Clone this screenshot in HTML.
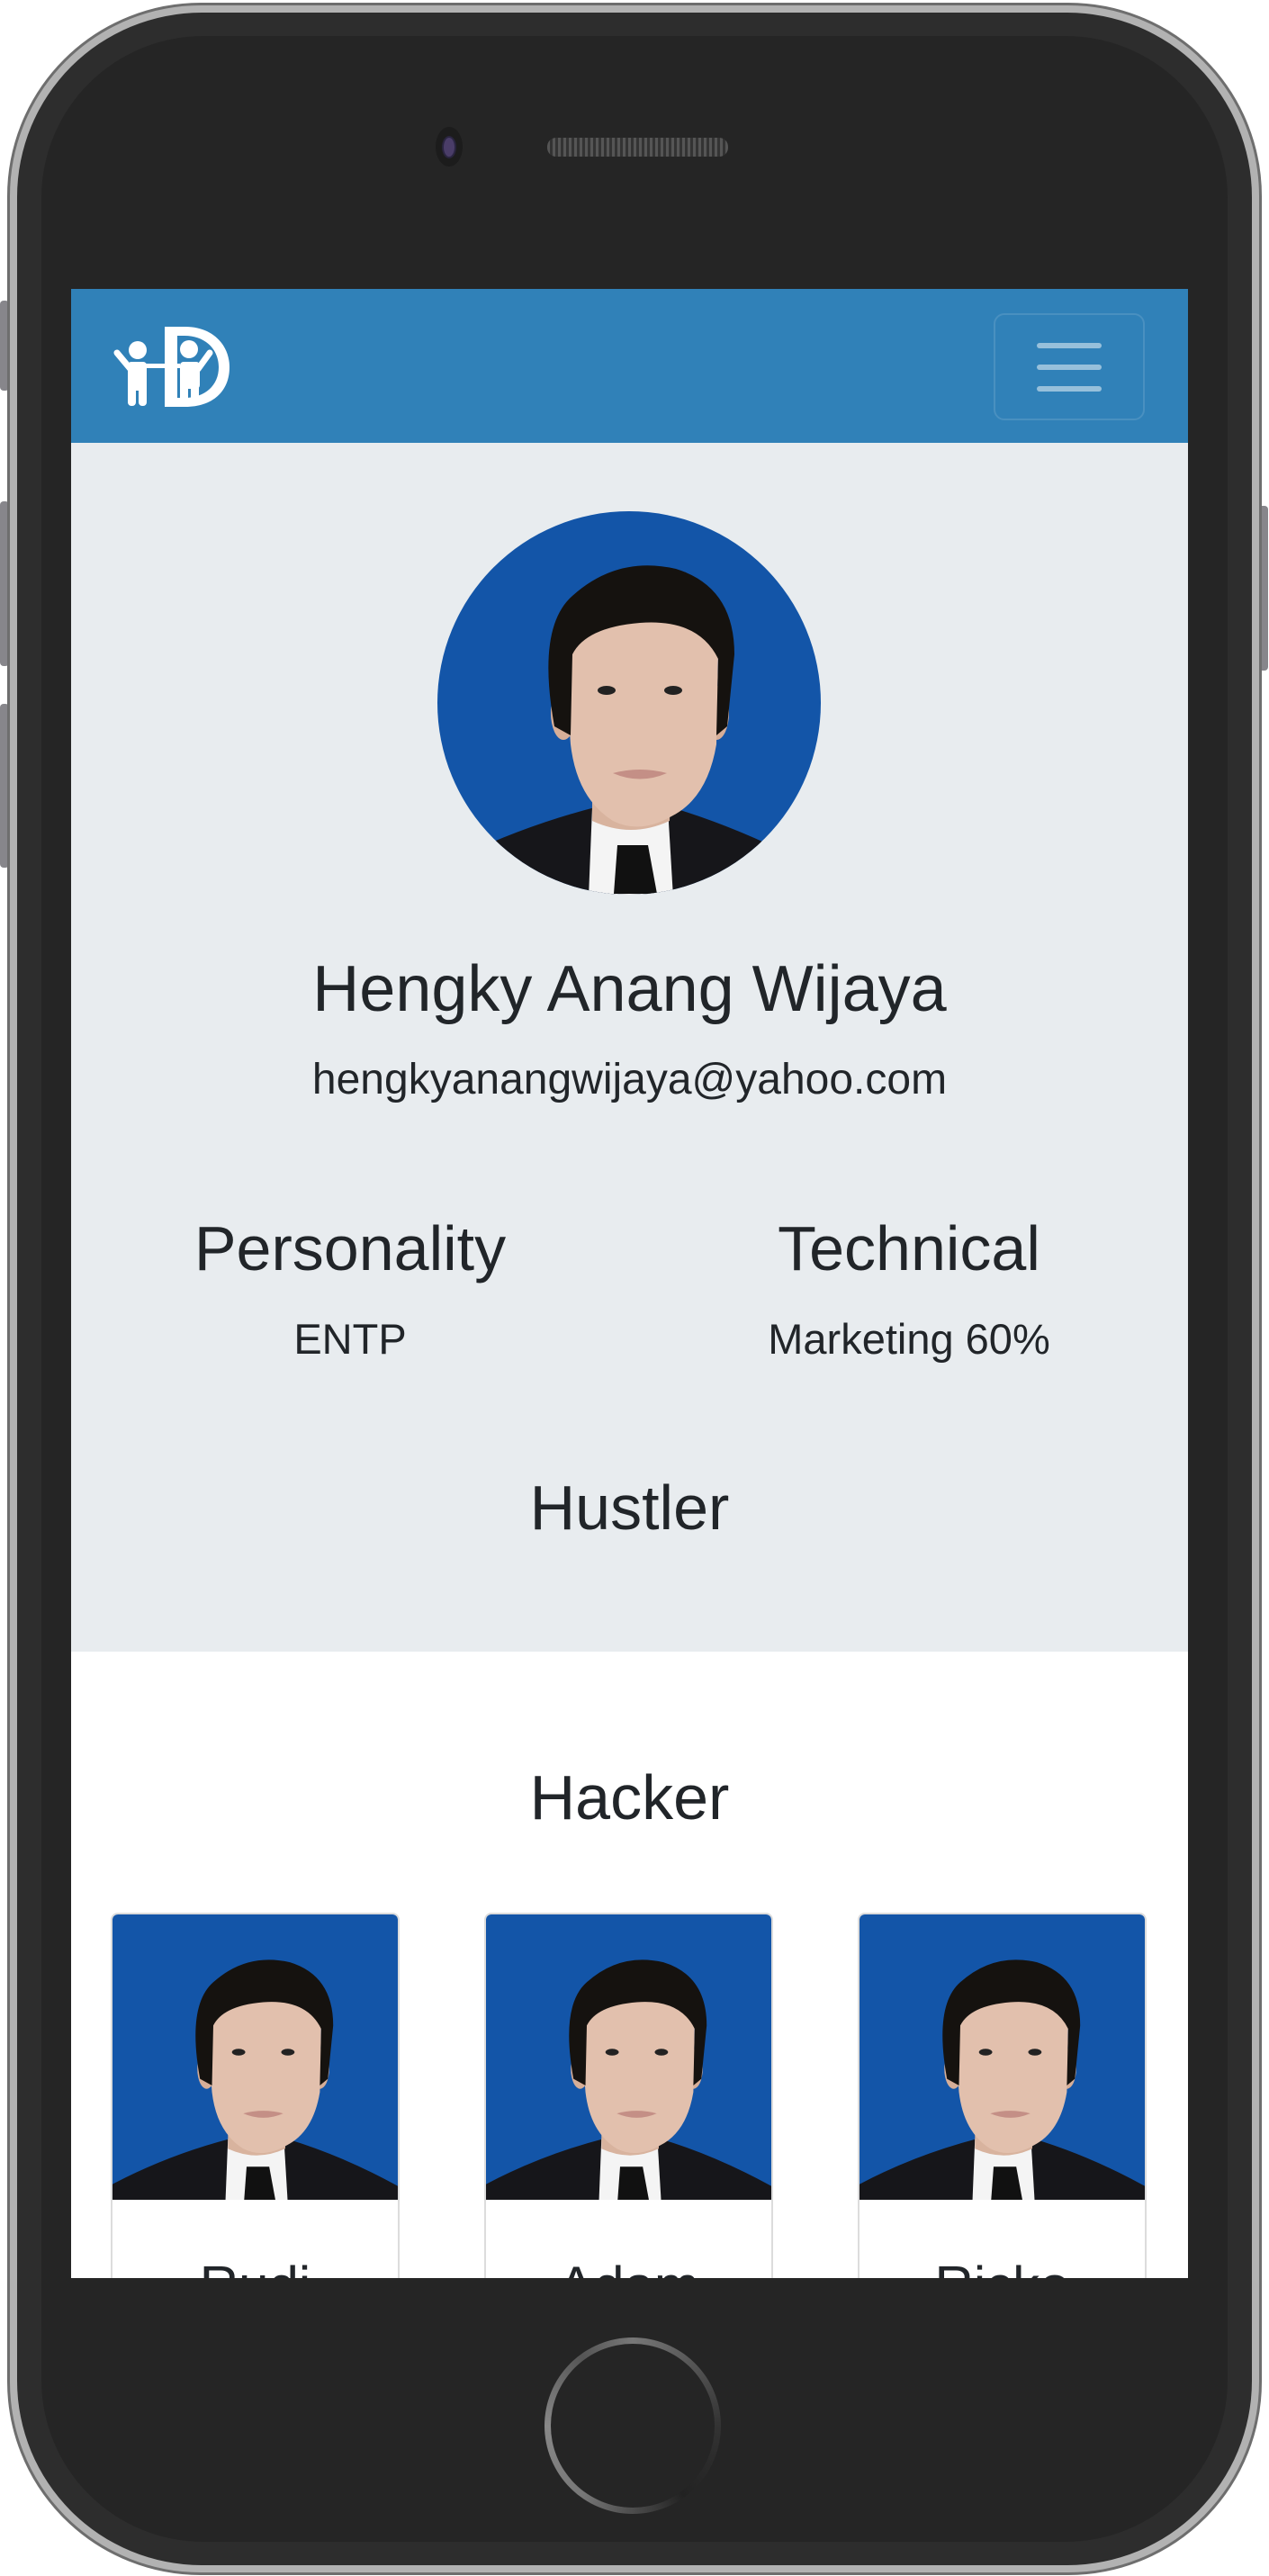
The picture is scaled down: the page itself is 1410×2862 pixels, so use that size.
<!DOCTYPE html>
<html><head><meta charset="utf-8"><style>
*{margin:0;padding:0;box-sizing:border-box}
html,body{width:1410px;height:2862px;background:#fff;overflow:hidden;font-family:"Liberation Sans",Arial,sans-serif;color:#212529}
.abs{position:absolute}
.t{position:absolute;left:0;width:100%;text-align:center;white-space:nowrap}
</style></head><body>
<div class="abs" style="left:0;top:334px;width:10px;height:100px;background:#87868b;border-radius:4px"></div>
<div class="abs" style="left:0;top:557px;width:10px;height:183px;background:#87868b;border-radius:4px"></div>
<div class="abs" style="left:0;top:782px;width:10px;height:182px;background:#87868b;border-radius:4px"></div>
<div class="abs" style="left:1398px;top:562px;width:11px;height:183px;background:#87868b;border-radius:4px"></div>
<div class="abs" style="left:8px;top:3px;width:1394px;height:2858px;border-radius:215px;background:#b2b2b2;border:3px solid #6e6e6e"></div>
<div class="abs" style="left:19px;top:14px;width:1372px;height:2836px;border-radius:205px;background:#2d2d2d"></div>
<div class="abs" style="left:46px;top:40px;width:1318px;height:2784px;border-radius:180px;background:#252525"></div>
<div class="abs" style="left:484px;top:141px;width:30px;height:44px;border-radius:50%;background:#1c1c1c"></div>
<div class="abs" style="left:491px;top:151px;width:16px;height:25px;border-radius:50%;background:#4a3d68;border:2px solid #2a2540"></div>
<div class="abs" style="left:608px;top:153px;width:201px;height:21px;border-radius:10px;background:repeating-linear-gradient(90deg,#555 0 3px,#333 3px 6px)"></div>
<div class="abs" style="left:79px;top:321px;width:1241px;height:2210px;background:#fff;overflow:hidden">
  <div class="abs" style="left:0;top:0;width:1241px;height:171px;background:#3081b8">
    <svg class="abs" style="left:0;top:0" width="300" height="171" viewBox="79 321 300 171">
      <g fill="#fff">
        <circle cx="153" cy="389" r="10"/>
        <circle cx="210" cy="388" r="10"/>
        <rect x="142" y="402" width="21" height="32" rx="4"/>
        <rect x="142" y="425" width="9" height="26" rx="4"/>
        <rect x="154" y="425" width="9" height="26" rx="4"/>
        <rect x="160" y="404" width="40" height="5"/>
        <rect x="200" y="402" width="22" height="30" rx="4"/>
        <rect x="200" y="425" width="9" height="20"/>
        <rect x="212" y="425" width="9" height="20"/>
      </g>
      <g stroke="#fff" stroke-width="7" stroke-linecap="round" fill="none">
        <path d="M130 392 L145 410"/>
        <path d="M233 392 L220 410"/>
      </g>
      <path d="M183 363 H206 C236 363 255 383 255 408 C255 435 236 452 206 452 H183 Z M197 373 V442 H205 C228 442 243 428 243 408 C243 388 228 373 205 373 Z" fill="#fff" fill-rule="evenodd"/>
    </svg>
    <div class="abs" style="left:1025px;top:27px;width:168px;height:119px;border:2px solid rgba(255,255,255,.12);border-radius:12px"></div>
    <div class="abs" style="left:1073px;top:60px;width:72px;height:6px;border-radius:3px;background:#97c0db"></div>
    <div class="abs" style="left:1073px;top:84px;width:72px;height:6px;border-radius:3px;background:#97c0db"></div>
    <div class="abs" style="left:1073px;top:108px;width:72px;height:6px;border-radius:3px;background:#97c0db"></div>
  </div>
  <div class="abs" style="left:0;top:171px;width:1241px;height:1343px;background:#e8ecef"></div>
  <svg width="0" height="0" style="position:absolute">
    <defs>
      <g id="pp">
        <rect x="-200" y="-50" width="826" height="700" fill="#1355a8"/>
        <path d="M-40 520 L-40 420 Q60 360 175 330 L260 330 Q360 360 460 420 L460 520 Z" fill="#16161a"/>
        <path d="M172 330 L256 330 L262 430 L168 430 Z" fill="#f4f4f4"/>
        <path d="M200 372 L234 372 L244 426 L196 426 Z" fill="#111"/>
        <path d="M172 290 L260 290 L258 345 Q215 365 172 345 Z" fill="#d8b39e"/>
        <ellipse cx="140" cy="225" rx="14" ry="30" fill="#d6ae98"/>
        <ellipse cx="310" cy="225" rx="14" ry="30" fill="#d6ae98"/>
        <path d="M140 150 Q140 90 225 88 Q315 90 312 160 L310 260 Q300 320 260 340 Q225 360 195 345 Q155 320 148 260 Z" fill="#e2c0ad"/>
        <path d="M130 240 Q110 130 150 95 Q200 50 265 65 Q330 85 330 160 L322 240 L310 250 L312 165 Q290 120 225 125 Q165 130 150 160 L148 250 Z" fill="#15120f"/>
        <ellipse cx="188" cy="200" rx="10" ry="5" fill="#222"/>
        <ellipse cx="262" cy="200" rx="10" ry="5" fill="#222"/>
        <path d="M195 292 Q225 284 255 292 Q225 305 195 292Z" fill="#c48f86"/>
      </g>
    </defs>
  </svg>
  <svg class="abs" style="left:407px;top:246px" width="426" height="428" viewBox="0 0 426 428">
    <clipPath id="cc"><circle cx="213" cy="214" r="213"/></clipPath>
    <g clip-path="url(#cc)"><use href="#pp"/></g>
  </svg>
  <div class="t" style="top:738px;font-size:72px;line-height:80px">Hengky Anang Wijaya</div>
  <div class="t" style="top:849px;font-size:48px;line-height:60px">hengkyanangwijaya@yahoo.com</div>
  <div class="abs" style="left:0;top:1026px;width:620px;text-align:center;font-size:70px;line-height:80px">Personality</div>
  <div class="abs" style="left:621px;top:1026px;width:620px;text-align:center;font-size:70px;line-height:80px">Technical</div>
  <div class="abs" style="left:0;top:1137px;width:620px;text-align:center;font-size:47px;line-height:60px">ENTP</div>
  <div class="abs" style="left:621px;top:1137px;width:620px;text-align:center;font-size:47px;line-height:60px">Marketing 60%</div>
  <div class="t" style="top:1314px;font-size:70px;line-height:80px">Hustler</div>
  <div class="t" style="top:1636px;font-size:70px;line-height:80px">Hacker</div>
  <div class="abs" style="left:44px;top:1804px;width:321px;height:500px;border:2px solid #dcdcdc;border-radius:8px;overflow:hidden">
    <svg width="319" height="317" viewBox="0 0 319 317"><g transform="translate(1,5) scale(0.74)"><use href="#pp"/></g></svg>
    <div class="abs" style="left:0;top:378px;width:100%;text-align:center;font-size:60px">Rudi</div>
  </div>
  <div class="abs" style="left:459px;top:1804px;width:321px;height:500px;border:2px solid #dcdcdc;border-radius:8px;overflow:hidden">
    <svg width="319" height="317" viewBox="0 0 319 317"><g transform="translate(1,5) scale(0.74)"><use href="#pp"/></g></svg>
    <div class="abs" style="left:0;top:378px;width:100%;text-align:center;font-size:60px">Adam</div>
  </div>
  <div class="abs" style="left:874px;top:1804px;width:321px;height:500px;border:2px solid #dcdcdc;border-radius:8px;overflow:hidden">
    <svg width="319" height="317" viewBox="0 0 319 317"><g transform="translate(1,5) scale(0.74)"><use href="#pp"/></g></svg>
    <div class="abs" style="left:0;top:378px;width:100%;text-align:center;font-size:60px">Ricko</div>
  </div>
</div>
<div class="abs" style="left:605px;top:2597px;width:196px;height:196px;border-radius:50%;background:conic-gradient(#777,#333 25%,#222 40%,#777 60%,#888 75%,#555 90%,#777)"></div>
<div class="abs" style="left:612px;top:2604px;width:182px;height:182px;border-radius:50%;background:#252525"></div>
</body></html>
